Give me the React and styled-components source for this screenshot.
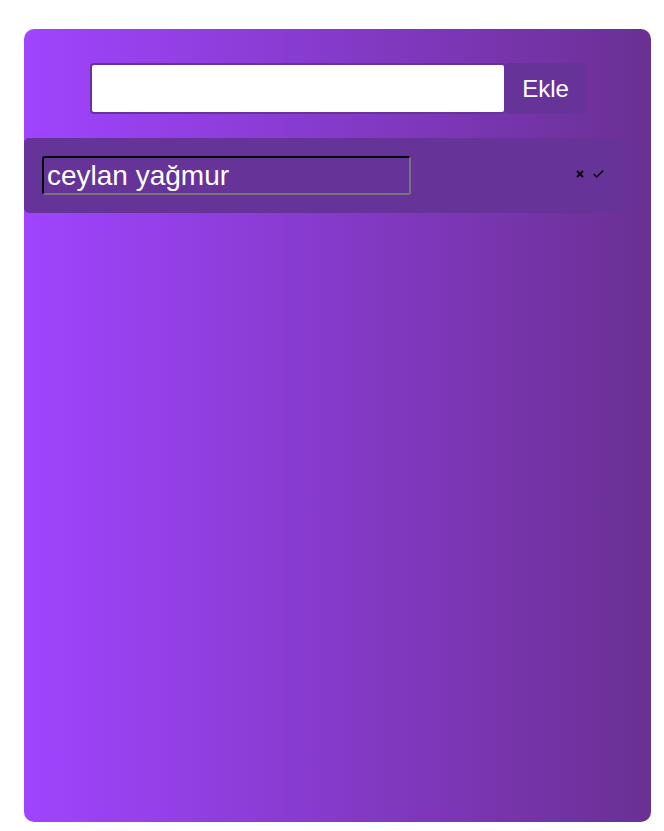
import React, { useState } from "react";
import styled, { createGlobalStyle } from "styled-components";

const GlobalStyle = createGlobalStyle`
  body {
    margin: 0;
    font-family: "Liberation Sans", Arial, sans-serif;
    background: #ffffff;
  }
`;

function App() {
  const [text, setText] = useState("");
  const [todos] = useState([{ id: 1, title: "ceylan yağmur" }]);

  return (
    <>
      <GlobalStyle />
      <StPage>
        <StCard>
          <StForm onSubmit={(e) => e.preventDefault()}>
            <StInput value={text} onChange={(e) => setText(e.target.value)} />
            <StAddButton type="submit">Ekle</StAddButton>
          </StForm>

          {todos.map((todo) => (
            <StTodoRow key={todo.id}>
              <StTodoInput defaultValue={todo.title} />
              <StActions>
                <StIconButton aria-label="sil">
                  <svg width="8" height="8" viewBox="0 0 8 8">
                    <path d="M1 1 L7 7 M7 1 L1 7" stroke="#000" strokeWidth="1.8" />
                  </svg>
                </StIconButton>
                <StIconButton aria-label="tamam">
                  <svg width="11" height="8" viewBox="0 0 11 8">
                    <path d="M0.8 4 L3.8 7 L10.2 0.6" stroke="#000" strokeWidth="1.4" fill="none" />
                  </svg>
                </StIconButton>
              </StActions>
            </StTodoRow>
          ))}
        </StCard>
      </StPage>
    </>
  );
}

export default App;

const StPage = styled.div`
  padding: 29px 13px 9px 24px;
`;

const StCard = styled.div`
  height: 793px;
  box-sizing: border-box;
  padding-top: 34px;
  border-radius: 10px;
  background: linear-gradient(90deg, #a044ff, #6a3093);
`;

const StForm = styled.form`
  display: flex;
  justify-content: center;
  margin-bottom: 24px;
`;

const StInput = styled.input`
  width: 416px;
  height: 51px;
  box-sizing: border-box;
  border: 2px solid #663399;
  border-radius: 4px;
  background: #ffffff;
  font-size: 24px;
  font-family: inherit;
  outline: none;
`;

const StAddButton = styled.button`
  width: 80px;
  height: 51px;
  border: none;
  border-radius: 4px;
  background-color: #663399;
  color: #ffffff;
  font-size: 24px;
  font-family: inherit;
  cursor: pointer;
`;

const StTodoRow = styled.div`
  width: 601px;
  height: 75px;
  box-sizing: border-box;
  padding: 0 21px 0 18px;
  display: flex;
  align-items: center;
  justify-content: space-between;
  border-radius: 5px;
  background-color: #663399;
`;

const StTodoInput = styled.input`
  width: 369px;
  height: 39px;
  box-sizing: border-box;
  padding: 0 3px;
  border: 2px inset #767676;
  border-top-color: #222222;
  border-left-color: #222222;
  border-radius: 3px;
  background: transparent;
  color: #ffffff;
  font-size: 28px;
  font-family: inherit;
  outline: none;
`;

const StActions = styled.div`
  display: flex;
  align-items: center;
  gap: 9px;
  margin-top: -4px;
`;

const StIconButton = styled.button`
  display: flex;
  border: none;
  background: transparent;
  padding: 0;
  cursor: pointer;
`;
